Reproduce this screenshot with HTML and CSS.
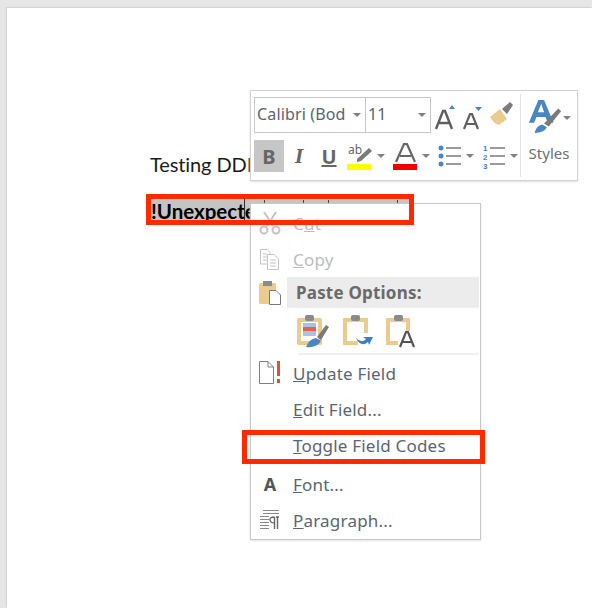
FILE: index.html
```html
<!DOCTYPE html>
<html lang="en">
<head>
    <meta charset="UTF-8">
    <title>Word context menu</title>
    <link rel="stylesheet" href="styles.css">
</head>
<body>
<div class="doc">
    <p class="line">Testing DDE</p>
    <p class="line field"><span class="sel">!Unexpected</span></p>
</div>

<div class="mini">
    <div class="mini-main">
        <div class="mini-row">
            <div class="combo font-combo"><span>Calibri (Bod</span><i class="caret"></i></div>
            <div class="combo size-combo"><span>11</span><i class="caret"></i></div>
            <svg class="tool-icon grow" width="30" height="32" viewBox="0 0 30 32">
                <path d="M5 30 L12 12 L14 12 L21 30 M8 24 H18" fill="none" stroke="#5f5f5f" stroke-width="2.4"/>
                <path d="M18 10 L21 6 L24 10 Z" fill="#4a86c5"/>
            </svg>
            <svg class="tool-icon" width="26" height="32" viewBox="0 0 26 32">
                <path d="M3 30 L9 15 L11 15 L17 30 M6 25 H14" fill="none" stroke="#5f5f5f" stroke-width="2.2"/>
                <path d="M14 8 H21 L17.500 12 Z" fill="#4a86c5"/>
            </svg>
            <svg class="tool-icon" width="30" height="32" viewBox="0 0 30 32">
                <path d="M3 18 L13 10 L20 20 L12 26 Q7 25 3 18 Z" fill="#eccb8e"/>
                <path d="M15 10 L23 3 L26 6 L20 15 Z" fill="#7a7a7a"/>
            </svg>
        </div>
        <div class="mini-row">
            <span class="fmt fmt-on"><b>B</b></span>
            <span class="fmt fmt-i">I</span>
            <span class="fmt fmt-u">U</span>
            <svg class="tool-icon tool-hl" width="26" height="30" viewBox="0 0 26 30">
                <text x="1" y="13" class="svg-ab">ab</text>
                <path d="M10 18 L22 7 L25 10 L14 20 L10 21 Z" fill="#7a7a7a"/>
                <rect x="0" y="23" width="24" height="6" fill="#ffff00"/>
            </svg>
            <i class="caret caret-tool"></i>
            <svg class="tool-icon" width="25" height="30" viewBox="0 0 25 30">
                <path d="M3 21 L11 3 L14 3 L22 21 M7 15 H18" fill="none" stroke="#666" stroke-width="2.2"/>
                <rect x="0" y="23" width="24" height="6" fill="#f00000"/>
            </svg>
            <i class="caret caret-tool"></i>
            <svg class="tool-icon" width="24" height="30" viewBox="0 0 24 30">
                <circle cx="3" cy="7" r="2.500" fill="#4a86c5"/>
                <circle cx="3" cy="15" r="2.500" fill="#4a86c5"/>
                <circle cx="3" cy="23" r="2.500" fill="#4a86c5"/>
                <path d="M8 7 H23 M8 15 H23 M8 23 H23" stroke="#7a7a7a" stroke-width="1.300"/>
            </svg>
            <i class="caret caret-tool"></i>
            <svg class="tool-icon" width="24" height="30" viewBox="0 0 24 30">
                <text x="1" y="10" class="svg-num">1</text>
                <text x="1" y="19" class="svg-num">2</text>
                <text x="1" y="28" class="svg-num">3</text>
                <path d="M8 7 H23 M8 15 H23 M8 23 H23" stroke="#7a7a7a" stroke-width="1.300"/>
            </svg>
            <i class="caret caret-tool"></i>
        </div>
    </div>
    <div class="mini-styles">
        <div class="styles-icon">
            <svg width="36" height="38" viewBox="0 0 38 38">
                <path d="M2 26 L12 2 L18 2 L28 26 H22 L19.500 20 H10 L7.500 26 Z M11.500 15 H18 L15 6 Z" fill="#4a86c5" fill-rule="evenodd"/>
                <path d="M18 27 L33 11 L36 14 L23 30 Z" fill="#7a7a7a"/>
                <path d="M8 37 Q10 29 16 28 L21 31 Q18 37 8 37 Z" fill="#4a86c5"/>
            </svg>
            <i class="caret"></i>
        </div>
        <span class="styles-label">Styles</span>
    </div>
</div>

<div class="menu">
    <div class="item off">
        <span class="ico">
            <svg width="22" height="24" viewBox="0 0 22 24">
                <path d="M5 1 L14 15 M17 1 L8 15" stroke="#c4c4c4" stroke-width="2" fill="none"/>
                <circle cx="5" cy="19" r="3.500" fill="none" stroke="#c4c4c4" stroke-width="2"/>
                <circle cx="17" cy="19" r="3.500" fill="none" stroke="#c4c4c4" stroke-width="2"/>
            </svg>
        </span>
        <span>C<u>u</u>t</span>
    </div>
    <div class="item off">
        <span class="ico">
            <svg width="22" height="24" viewBox="0 0 22 24">
                <path d="M1.500 2.500 H8 L11 5.500 V17 H1.500 Z" fill="#fff" stroke="#c4c4c4"/>
                <path d="M8.500 7.500 H15 L19.500 12 V22.500 H8.500 Z" fill="#fff" stroke="#c4c4c4"/>
                <path d="M4 7 H8 M4 10 H8 M4 13 H8 M11 13 H17 M11 16 H17 M11 19 H17" stroke="#c4c4c4"/>
            </svg>
        </span>
        <span><u>C</u>opy</span>
    </div>
    <div class="paste-head">
        <span class="ico">
            <svg width="22" height="26" viewBox="0 0 22 26">
                <rect x="0" y="3" width="17" height="21" rx="1.500" fill="#eccb8e"/>
                <rect x="4" y="1" width="9" height="5" fill="#8a8a8a"/>
                <path d="M10.500 10.500 H17 L21.500 15 V24.500 H10.500 Z" fill="#fff" stroke="#7a7a7a"/>
            </svg>
        </span>
        <span class="paste-title">Paste Options:</span>
    </div>
    <div class="paste-icons">
        <svg width="32" height="34" viewBox="0 0 32 34">
            <rect x="0" y="4" width="25" height="27" rx="2" fill="#eccb8e"/>
            <rect x="4" y="8" width="17" height="19" fill="#fff"/>
            <rect x="6" y="9" width="13" height="13" fill="#a9c4e3"/>
            <rect x="6" y="13" width="13" height="4" fill="#e8604c"/>
            <rect x="8" y="1" width="9" height="6" rx="2" fill="#8a8a8a"/>
            <path d="M20 23 L29 11 L32 13 L24 26 Z" fill="#7a7a7a"/>
            <path d="M9 33 Q12 25 19 24 L24 27 Q20 34 9 33 Z" fill="#4a86c5"/>
        </svg>
        <svg width="32" height="34" viewBox="0 0 32 34">
            <path d="M2 4 H27 V19 H23 V8 H6 V27 H17 V31 H2 Z" fill="#eccb8e"/>
            <rect x="10" y="1" width="9" height="6" rx="2" fill="#8a8a8a"/>
            <path d="M15 24 Q21 30 25 25 L22 23 H32 L28 31 L27 28 Q20 34 15 24 Z" fill="#3f7fc1"/>
        </svg>
        <svg width="32" height="34" viewBox="0 0 32 34">
            <path d="M1 4 H25 V17 H21 V8 H5 V27 H13 V31 H1 Z" fill="#eccb8e"/>
            <rect x="9" y="1" width="9" height="6" rx="2" fill="#8a8a8a"/>
            <path d="M15 33 L21 18 H23 L29 33 M17.500 28 H26.500" fill="none" stroke="#555" stroke-width="2.200"/>
        </svg>
    </div>
    <div class="rule"></div>
    <div class="item">
        <span class="ico">
            <svg width="24" height="26" viewBox="0 0 24 26">
                <path d="M1.500 1.500 H10 L15.500 7 V23.500 H1.500 Z M10 1.500 V7 H15.500" fill="#fff" stroke="#808080"/>
                <rect x="19" y="1" width="3" height="15" fill="#d9552c"/>
                <rect x="19" y="19" width="3" height="4" fill="#d9552c"/>
            </svg>
        </span>
        <span><u>U</u>pdate Field</span>
    </div>
    <div class="item"><span class="ico"></span><span><u>E</u>dit Field...</span></div>
    <div class="item"><span class="ico"></span><span><u>T</u>oggle Field Codes</span></div>
    <div class="rule-gap"></div>
    <div class="item">
        <span class="ico"><span class="font-a">A</span></span>
        <span><u>F</u>ont...</span>
    </div>
    <div class="item">
        <span class="ico">
            <svg width="22" height="22" viewBox="0 0 22 22">
                <path d="M4 1.500 H20 M4 4.500 H20 M1 7.500 H10 M1 10.500 H10 M1 13.500 H10 M1 16.500 H10 M1 19.500 H10" stroke="#8a8a8a"/>
                <path d="M17 8 H20 M18.500 8 V20 M15.500 8 V20 M15.500 8 Q10.500 8 11 11 Q11.500 14 15.500 14" fill="none" stroke="#666" stroke-width="1.400"/>
            </svg>
        </span>
        <span><u>P</u>aragraph...</span>
    </div>
</div>

<!-- red annotation boxes from the screenshot -->
<div class="mark mark-field"></div>
<div class="mark mark-toggle"></div>
</body>
</html>
```

FILE: styles.css
```css
html, body {
    margin: 0;
    padding: 0;
    width: 100%;
    height: 100%;
    overflow: hidden;
    background-color: #e6e6e6;
    font-family: "Noto Sans", sans-serif;
}

body {
    position: relative;
}

.doc {
    position: absolute;
    left: 7px;
    top: 8px;
    right: 0;
    bottom: 0;
    box-sizing: border-box;
    padding: 142px 0 0 143px;
    background-color: #fff;
    box-shadow: -1px -1px 1px #d4d4d4;
    font-family: Lato, sans-serif;
    font-size: 20px;
    color: #1a1a1a;
}

.line {
    margin: 0 0 18px 0;
    height: 28px;
    line-height: 28px;
    white-space: nowrap;
    letter-spacing: -0.1px;
}

.field {
    font-size: 20.5px;
    font-weight: bold;
    color: #000;
    letter-spacing: 0;
}

.sel {
    position: relative;
    display: inline-block;
    vertical-align: top;
    width: 259px;
    height: 22px;
    margin: 3px 0 0 1px;
    line-height: 24px;
    background-color: #c4c4c4;
}

/* caret of the field */
.sel::after {
    content: "";
    position: absolute;
    left: 93px;
    top: 0;
    bottom: 0;
    width: 1px;
    background-color: #333;
}

/* tops of the letters that stick out above the menu */
.sel::before {
    content: "";
    position: absolute;
    left: 113px;
    top: 1px;
    width: 1px;
    height: 3px;
    background-color: #444;
    box-shadow: 39px 0 #444, 64px 0 #444, 133px 0 #444;
}

/* mini toolbar */
.mini {
    position: absolute;
    left: 250px;
    top: 90px;
    width: 328px;
    height: 91px;
    box-sizing: border-box;
    display: flex;
    padding: 6px 0 0 3px;
    background-color: #fff;
    border: 1px solid #d2d2d2;
    box-shadow: 0 1px 2px #e0e0e0;
}

.mini-main {
    width: 266px;
    flex: none;
    display: flex;
    flex-direction: column;
    gap: 7px;
}

.mini-row {
    display: flex;
    align-items: center;
}

.combo {
    height: 36px;
    flex: none;
    box-sizing: border-box;
    display: flex;
    align-items: center;
    justify-content: space-between;
    padding: 0 4px 3px 2px;
    border: 1px solid #c6c6c6;
    font-size: 16px;
    letter-spacing: 0.15px;
    color: #5a6470;
}

.font-combo {
    width: 112px;
}

.size-combo {
    width: 65px;
    border-left: 0;
}

.caret {
    display: inline-block;
    flex: none;
    width: 0;
    height: 0;
    margin-top: 3px;
    border-left: 4px solid transparent;
    border-right: 4px solid transparent;
    border-top: 4px solid #808080;
}

.tool-icon {
    flex: none;
}

.grow {
    margin-left: 0;
}

.fmt {
    width: 30px;
    height: 32px;
    flex: none;
    display: flex;
    align-items: center;
    justify-content: center;
    font-size: 20px;
    color: #666;
}

.fmt-on {
    background-color: #c6c6c6;
}

.fmt-i {
    font-style: italic;
    font-weight: bold;
    font-family: "Liberation Serif", serif;
    font-size: 22px;
}

.fmt-u {
    font-weight: bold;
    text-decoration: underline;
}

.tool-hl {
    margin-left: 3px;
}

.caret-tool {
    margin: 0 8px 0 4px;
}

.svg-ab {
    font-family: "Noto Sans", sans-serif;
    font-size: 12px;
    fill: #666;
}

.svg-num {
    font-family: "Liberation Sans", sans-serif;
    font-size: 8px;
    font-weight: bold;
    fill: #3f7fc1;
}

.mini-styles {
    flex: 1;
    display: flex;
    flex-direction: column;
    align-items: center;
    margin: -3px 0 3px 0;
    border-left: 1px solid #e2e2e2;
}

.styles-icon {
    display: flex;
    align-items: center;
    margin-top: 3px;
}

.styles-label {
    margin-top: 8px;
    font-size: 15px;
    color: #6f6f6f;
}

/* context menu */
.menu {
    position: absolute;
    left: 250px;
    top: 203px;
    width: 231px;
    height: 337px;
    box-sizing: border-box;
    padding: 1px 1px 0 1px;
    background-color: #fff;
    border: 1px solid #c8c8c8;
    box-shadow: 0 1px 2px #e0e0e0;
    font-size: 17px;
    letter-spacing: 0.2px;
    color: #5b6570;
}

.item {
    height: 36px;
    display: flex;
    align-items: center;
}

.off {
    color: #bcbcbc;
}

.ico {
    width: 41px;
    flex: none;
    display: flex;
    justify-content: center;
    padding-right: 5px;
    box-sizing: border-box;
}

.paste-head {
    height: 31px;
    display: flex;
    align-items: center;
}

.paste-title {
    flex: 1;
    align-self: stretch;
    display: flex;
    align-items: center;
    margin-left: -6px;
    padding-left: 9px;
    background-color: #ececec;
    font-weight: bold;
    color: #6a6a6a;
}

.paste-icons {
    height: 45px;
    display: flex;
    align-items: center;
    gap: 12px;
    padding-left: 45px;
}

.rule {
    height: 2px;
    margin-left: 46px;
    background-color: #f0f0f0;
}

.rule-gap {
    height: 3px;
}

.font-a {
    font-weight: bold;
    font-size: 18px;
    line-height: 22px;
    color: #555;
}

/* annotation boxes lie over everything */
.mark {
    position: absolute;
    box-sizing: border-box;
    border: 5px solid #ff2a00;
}

.mark-field {
    left: 146px;
    top: 194px;
    width: 268px;
    height: 31px;
}

.mark-toggle {
    left: 242px;
    top: 430px;
    width: 243px;
    height: 34px;
}
```
